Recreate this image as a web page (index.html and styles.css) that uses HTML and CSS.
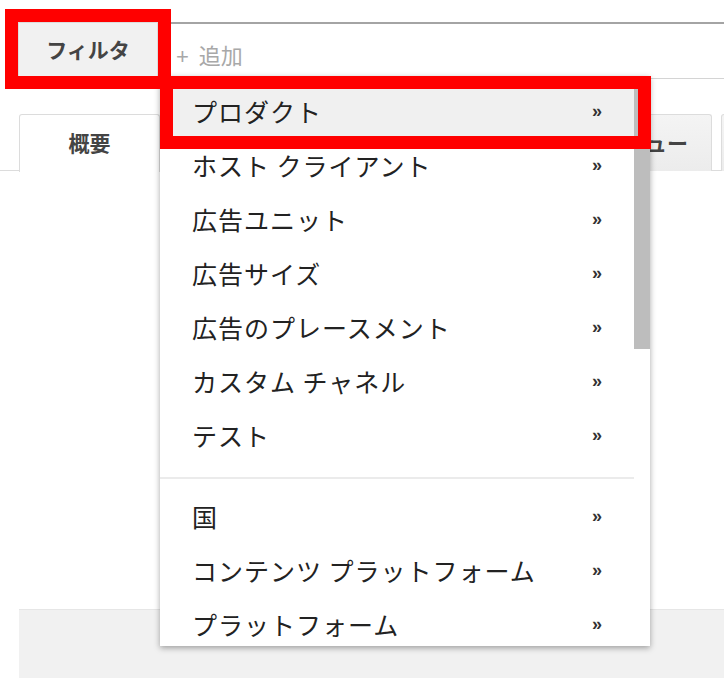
FILE: index.html
```html
<!DOCTYPE html>
<html lang="ja">

<head>
    <meta charset="UTF-8">
    <meta name="viewport" content="width=device-width, initial-scale=1.0">
    <title>フィルタ</title>
    <link rel="stylesheet" href="styles.css">
</head>

<body>
    <div class="page">
        <!-- フィルタバー -->
        <div class="filter-bar">
            <span class="filter-btn">フィルタ</span>
            <div class="filter-input"><span class="plus">+</span>追加</div>
        </div>

        <!-- タブ（一部はメニューの下に隠れている） -->
        <div class="tabs">
            <div class="tab active">概要</div>
            <div class="tab tab-mid"></div>
            <div class="tab tab-view">ビュー</div>
            <div class="tab tab-more"></div>
        </div>

        <div class="content"></div>
        <div class="bottom-panel"></div>

        <!-- ドロップダウン -->
        <div class="menu">
            <ul class="menu-list">
                <li class="menu-item hover"><span>プロダクト</span><i>»</i></li>
                <li class="menu-item"><span>ホスト クライアント</span><i>»</i></li>
                <li class="menu-item"><span>広告ユニット</span><i>»</i></li>
                <li class="menu-item"><span>広告サイズ</span><i>»</i></li>
                <li class="menu-item"><span>広告のプレースメント</span><i>»</i></li>
                <li class="menu-item"><span>カスタム チャネル</span><i>»</i></li>
                <li class="menu-item"><span>テスト</span><i>»</i></li>
                <li class="menu-sep"></li>
                <li class="menu-item"><span>国</span><i>»</i></li>
                <li class="menu-item"><span>コンテンツ プラットフォーム</span><i>»</i></li>
                <li class="menu-item"><span>プラットフォーム</span><i>»</i></li>
            </ul>
            <div class="scroll-thumb"></div>
        </div>

        <!-- 注釈の赤枠 -->
        <div class="mark mark-filter"></div>
        <div class="mark mark-item"></div>
    </div>
</body>

</html>
```

FILE: styles.css
```css
* {
    margin: 0;
    padding: 0;
    box-sizing: border-box;
}

html,
body {
    width: 724px;
    height: 678px;
    overflow: hidden;
    background-color: #fff;
    font-family: "Noto Sans CJK JP", "Liberation Sans", sans-serif;
}

.page {
    position: relative;
    width: 724px;
    height: 678px;
    overflow: hidden;
    display: flex;
    flex-direction: column;
}
/* フィルタバー */

.filter-bar {
    display: flex;
    margin-top: 22px;
    padding-left: 18px;
    height: 57px;
}

.filter-btn {
    width: 140px;
    height: 55px;
    line-height: 53px;
    text-align: center;
    border: 1px solid #dcdcdc;
    background-color: #f1f1f1;
    color: #444;
    font-size: 21px;
    font-weight: bold;
}

.filter-input {
    flex: 1;
    border-top: 2px solid #a4a4a4;
    border-bottom: 1px solid #d4d4d4;
    padding-left: 18px;
    line-height: 60px;
    color: #a8a8a8;
    font-size: 22px;
}

.filter-input .plus {
    font-family: "Liberation Sans", sans-serif;
    margin-right: 10px;
}
/* タブ */

.tabs {
    display: flex;
    gap: 9px;
    margin-top: 35px;
    padding-left: 19px;
    height: 57px;
    border-bottom: 1px solid #dcdcdc;
}

.tab {
    flex: none;
    height: 57px;
    line-height: 55px;
    text-align: center;
    border: 1px solid #dcdcdc;
    border-bottom: none;
    border-radius: 3px 3px 0 0;
    background: linear-gradient(#f4f4f4, #ececec);
    color: #444;
    font-size: 21px;
    font-weight: bold;
}

.tab.active {
    width: 141px;
    height: 58px;
    background: #fff;
}

.tab-mid {
    width: 423px;
}

.tab-view {
    width: 111px;
}

.tab-more {
    width: 100px;
}

.content {
    height: 438px;
}

.bottom-panel {
    flex: 1;
    margin-left: 19px;
    background-color: #f1f1f1;
    border-top: 1px solid #e6e6e6;
}
/* ドロップダウン */

.menu {
    position: absolute;
    left: 160px;
    top: 76px;
    width: 490px;
    height: 570px;
    overflow: hidden;
    background-color: #fff;
    box-shadow: 0 2px 6px rgba(0, 0, 0, 0.35);
}

.menu-list {
    list-style: none;
    padding-top: 9px;
}

.menu-item {
    display: flex;
    align-items: center;
    justify-content: space-between;
    height: 54px;
    padding: 0 48px 2px 32px;
    color: #222;
    font-size: 25px;
    letter-spacing: 1px;
}

.menu-item.hover {
    background-color: #f0f0f0;
}

.menu-item i {
    font-style: normal;
    font-family: "Liberation Sans", sans-serif;
    font-weight: bold;
    font-size: 18px;
    letter-spacing: 0;
    color: #333;
}

.menu-sep {
    height: 2px;
    margin: 14px 16px 11px 0;
    background-color: #ebebeb;
}

.scroll-thumb {
    position: absolute;
    right: 0;
    top: 0;
    width: 16px;
    height: 273px;
    background-color: #bdbdbd;
}
/* 赤枠 */

.mark {
    position: absolute;
    border: 13px solid #f00;
}

.mark-filter {
    left: 5px;
    top: 9px;
    width: 166px;
    height: 80px;
}

.mark-item {
    left: 160px;
    top: 76px;
    width: 491px;
    height: 73px;
}
```
